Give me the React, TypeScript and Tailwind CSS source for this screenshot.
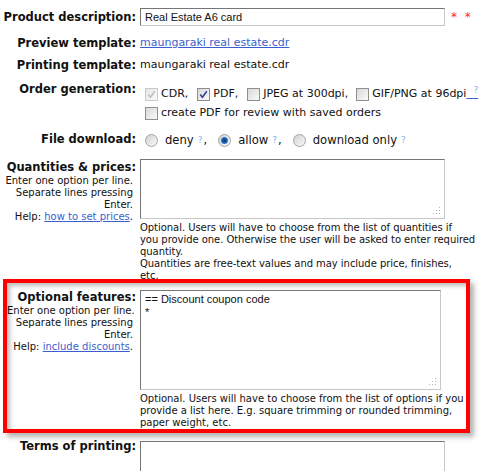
import React from "react";

const help = "text-[10px] leading-[12px] whitespace-nowrap";

function Check({ checked, disabled }: { checked?: boolean; disabled?: boolean }) {
  return (
    <span
      className={`inline-flex shrink-0 w-[13px] h-[13px] items-center justify-center border bg-gradient-to-br ${
        disabled ? "border-[#c9c9c9] from-[#e6e6e6] to-[#fbfbfb]" : "border-[#8f8f8f] from-[#d8d8d8] to-[#fafafa]"
      }`}
    >
      {checked && (
        <svg width="9" height="9" viewBox="0 0 9 9">
          <path
            d="M1.2 4.6 L3.4 7.2 L7.8 1.2"
            stroke={disabled ? "#bdbdbd" : "#2b3c94"}
            strokeWidth="1.5"
            fill="none"
          />
        </svg>
      )}
    </span>
  );
}

function Radio({ checked }: { checked?: boolean }) {
  return (
    <span className="relative inline-block shrink-0 w-[13px] h-[13px] rounded-full border border-[#a3a3a3] bg-gradient-to-br from-[#d2d2d2] to-[#fafafa]">
      {checked && (
        <span className="absolute left-[2px] top-[2px] w-[7px] h-[7px] rounded-full bg-[radial-gradient(circle,#0c2f66_0%,#1d6cc0_55%,#86c4f0_100%)]" />
      )}
    </span>
  );
}

function Q() {
  return <sup className="text-[9px] text-[#86aef0] relative top-[-1px] ml-[4px]">?</sup>;
}

function Grip() {
  return (
    <svg className="absolute right-[3px] bottom-[3px]" width="9" height="9" viewBox="0 0 9 9">
      <rect x="7" y="1" width="1" height="1" fill="#b5b5b5" />
      <rect x="4" y="4" width="1" height="1" fill="#b5b5b5" />
      <rect x="7" y="4" width="1" height="1" fill="#b5b5b5" />
      <rect x="1" y="7" width="1" height="1" fill="#b5b5b5" />
      <rect x="4" y="7" width="1" height="1" fill="#b5b5b5" />
      <rect x="7" y="7" width="1" height="1" fill="#b5b5b5" />
    </svg>
  );
}

function Box({ className, children }: { className: string; children?: React.ReactNode }) {
  return (
    <div
      className={`relative border border-t-[#767676] border-l-[#767676] border-r-[#c7c7c7] border-b-[#c7c7c7] bg-white font-['Liberation_Sans',Arial,sans-serif] text-[11px] ${className}`}
    >
      {children}
    </div>
  );
}

const label = "w-[136px] shrink-0 text-right font-bold text-[11.5px] leading-[14px]";

export default function App() {
  return (
    <div className="w-[483px] h-[471px] overflow-hidden bg-white text-[#111] font-['DejaVu_Sans',Verdana,sans-serif] text-[11px]">
      {/* Product description */}
      <div className="flex items-center pt-[8px]">
        <div className={label}>Product description:</div>
        <Box className="ml-[4px] w-[305px] h-[18px] px-[4px] leading-[16px]">Real Estate A6 card</Box>
        <span className="ml-[6px] text-[#ff2a10] text-[12px] whitespace-pre">*  *</span>
      </div>

      {/* Templates */}
      <div className="flex items-center h-[22px] mt-[6px]">
        <div className={label}>Preview template:</div>
        <a className="ml-[4px] text-[#3a5fcd] underline">maungaraki real estate.cdr</a>
      </div>
      <div className="flex items-center h-[22px]">
        <div className={label}>Printing template:</div>
        <span className="ml-[4px]">maungaraki real estate.cdr</span>
      </div>

      {/* Order generation */}
      <div className="flex mt-[6px]">
        <div className={label}>Order generation:</div>
        <div className="ml-[4px] pl-[5px] pt-[3px]">
          <div className="flex items-center h-[19px] whitespace-nowrap">
            <Check checked disabled />
            <span className="ml-[3px] mr-[9px]">CDR,</span>
            <Check checked />
            <span className="ml-[3px] mr-[9px]">PDF,</span>
            <Check />
            <span className="ml-[3px] mr-[8px]">JPEG at 300dpi,</span>
            <Check />
            <span className="ml-[3px]">GIF/PNG at 96dpi</span>
            <a className="text-[#86aef0] underline decoration-[#3a5fcd] whitespace-pre">
              {"  "}
              <sup className="text-[9px]">?</sup>
            </a>
          </div>
          <div className="flex items-center h-[19px] whitespace-nowrap">
            <Check />
            <span className="ml-[3px]">create PDF for review with saved orders</span>
          </div>
        </div>
      </div>

      {/* File download */}
      <div className="flex mt-[8px]">
        <div className={`${label} pt-[1px]`}>File download:</div>
        <div className="ml-[4px] pl-[5px] pt-[3px] flex items-center h-[16px] whitespace-nowrap text-[11.6px]">
          <Radio />
          <span className="ml-[7px]">deny</span>
          <Q />
          <span className="ml-[1px] mr-[11px]">,</span>
          <Radio checked />
          <span className="ml-[7px]">allow</span>
          <Q />
          <span className="ml-[1px] mr-[11px]">,</span>
          <Radio />
          <span className="ml-[7px]">download only</span>
          <Q />
        </div>
      </div>

      {/* Quantities */}
      <div className="flex mt-[12px]">
        <div className="w-[136px] shrink-0 text-right">
          <div className="font-bold text-[11.5px] leading-[14px] pt-[1px]">Quantities &amp; prices:</div>
          <div className={`${help} pr-[3px] pt-[1px]`}>
            Enter one option per line.
            <br />
            Separate lines pressing
            <br />
            Enter.
            <br />
            Help: <a className="text-[#3a5fcd] underline">how to set prices</a>.
          </div>
        </div>
        <div className="ml-[4px]">
          <Box className="w-[305px] h-[60px]">
            <Grip />
          </Box>
          <div className={`${help} pt-[3px] tracking-[-0.05px]`}>
            Optional. Users will have to choose from the list of quantities if
            <br />
            you provide one. Otherwise the user will be asked to enter required
            <br />
            quantity.
            <br />
            Quantities are free-text values and may include price, finishes,
            <br />
            etc.
          </div>
        </div>
      </div>

      {/* Optional features (highlighted) */}
      <div className="ml-[3px] mt-[-3px] w-[467px] h-[154px] border-4 border-[#ff0000] shadow-[inset_3px_3px_4px_rgba(0,0,0,0.25),4px_4px_5px_rgba(0,0,0,0.3)] flex pt-[7px]">
        <div className="w-[129px] shrink-0 text-right">
          <div className="font-bold text-[11.5px] leading-[14px]">Optional features:</div>
          <div className={`${help} pr-[3px] pt-[1px]`}>
            Enter one option per line.
            <br />
            Separate lines pressing
            <br />
            Enter.
            <br />
            Help: <a className="text-[#3a5fcd] underline">include discounts</a>.
          </div>
        </div>
        <div className="ml-[4px]">
          <Box className="w-[301px] h-[100px] px-[4px] pt-[2px] leading-[13px]">
            == Discount coupon code
            <br />
            *
            <Grip />
          </Box>
          <div className={`${help} pt-[3px]`}>
            Optional. Users will have to choose from the list of options if you
            <br />
            provide a list here. E.g. square trimming or rounded trimming,
            <br />
            paper weight, etc.
          </div>
        </div>
      </div>

      {/* Terms of printing */}
      <div className="flex mt-[6px]">
        <div className={label}>Terms of printing:</div>
        <Box className="ml-[4px] mt-[2px] w-[305px] h-[60px]" />
      </div>
    </div>
  );
}
